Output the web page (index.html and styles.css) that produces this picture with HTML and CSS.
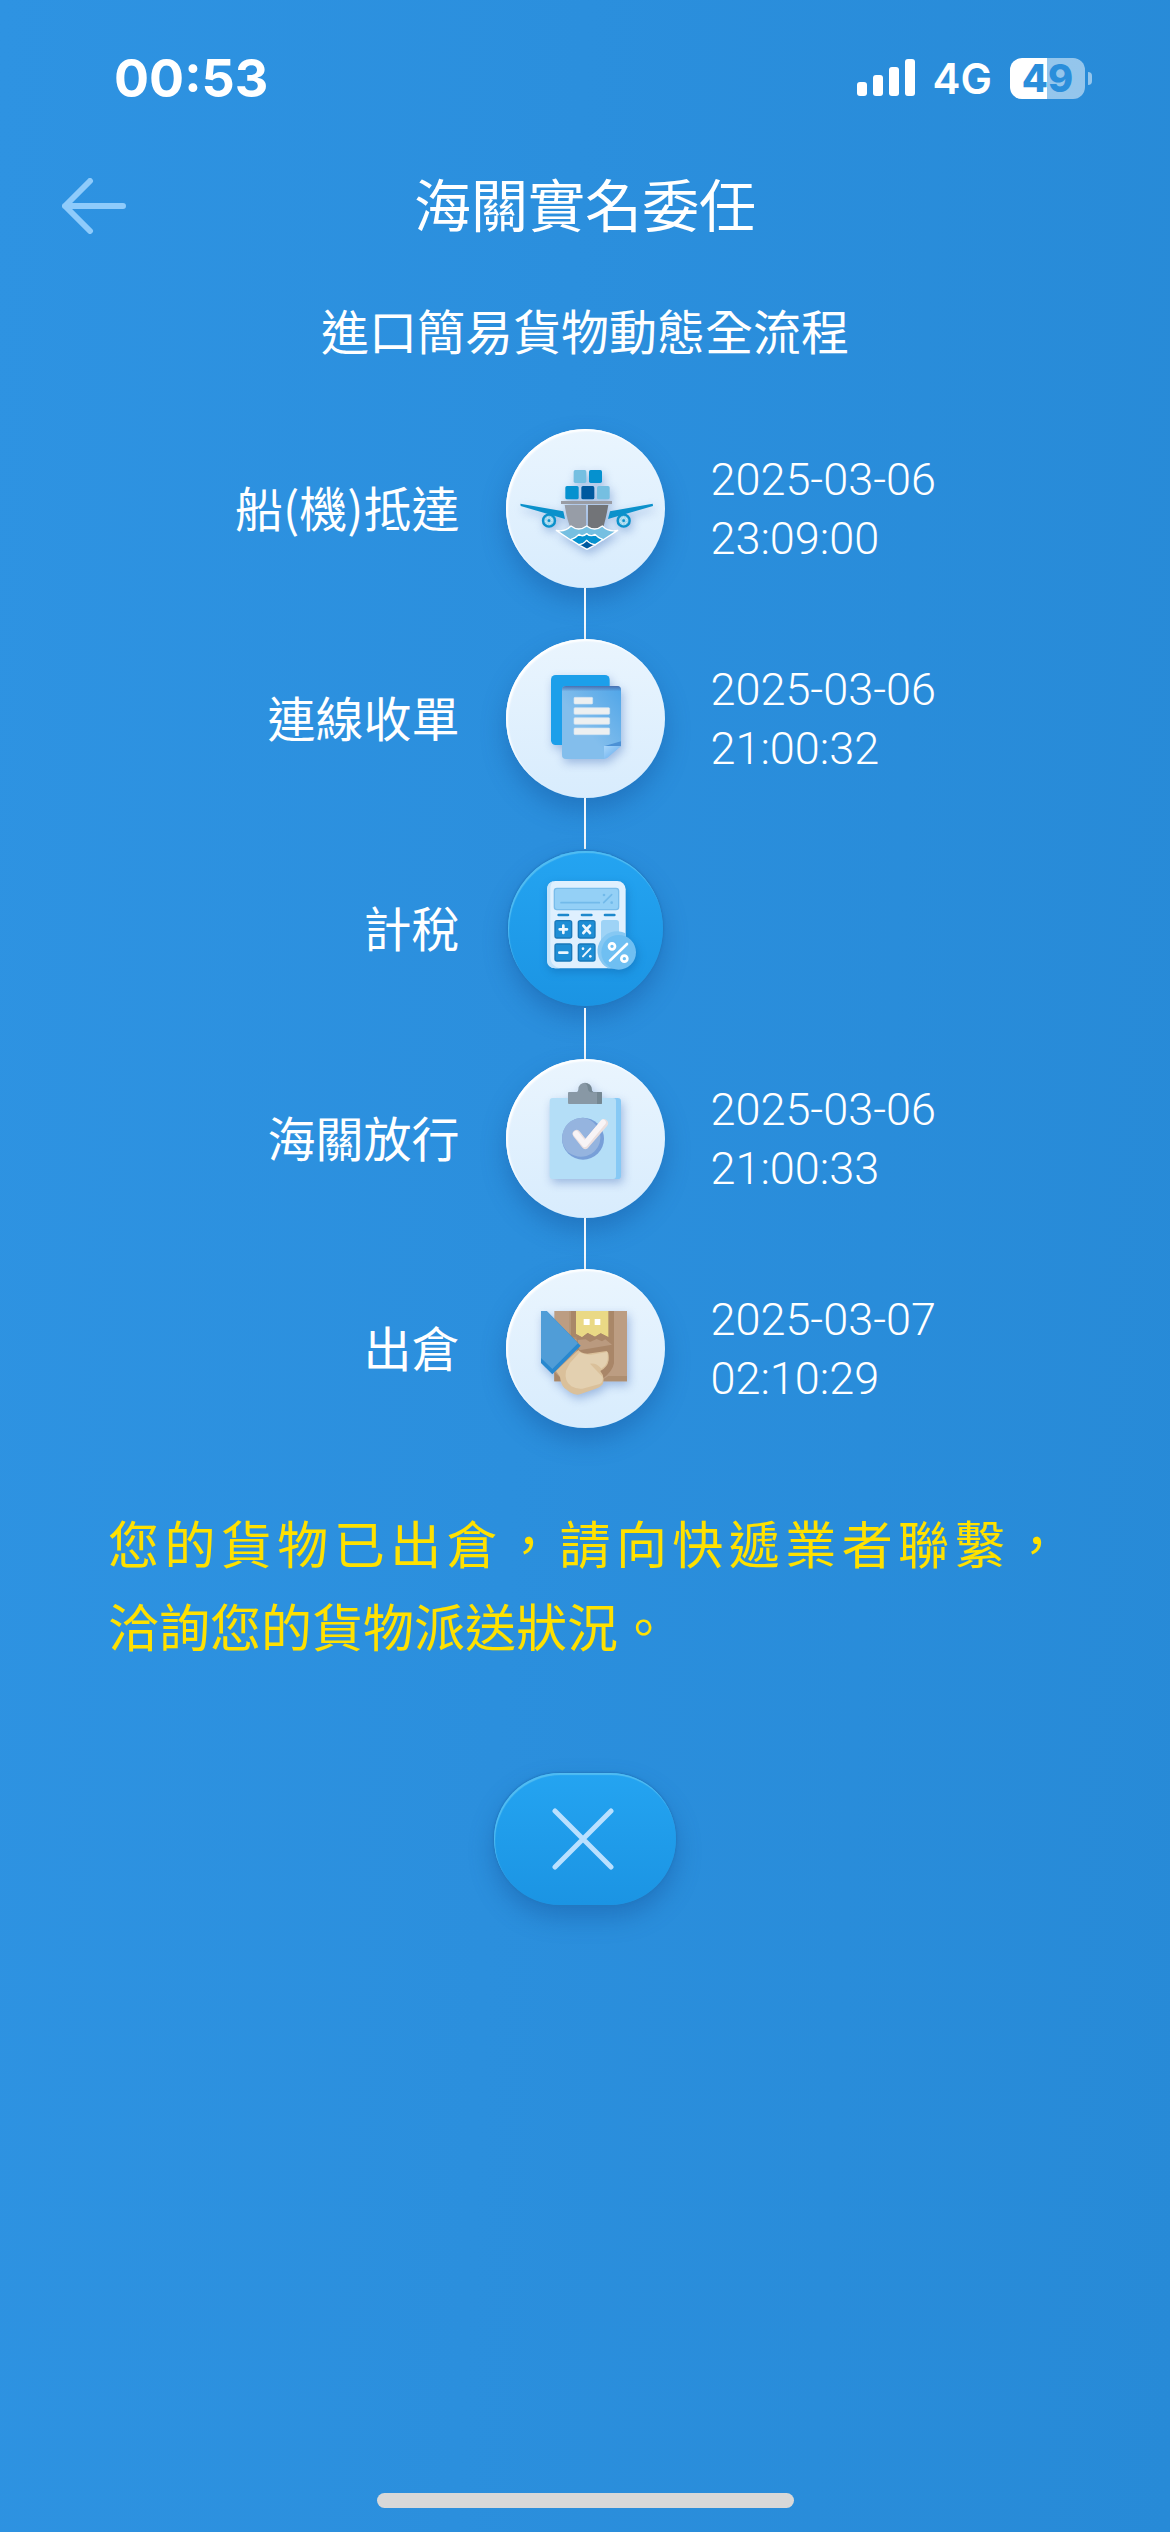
FILE: index.html
```html
<!DOCTYPE html>
<html lang="zh-Hant">
<head>
  <meta charset="utf-8" />
  <meta name="viewport" content="width=device-width, initial-scale=1" />
  <title>海關實名委任</title>
  <link rel="stylesheet" href="styles.css">
</head>
<body>
  <div class="status-bar">
    <span class="clock">00:53</span>
    <div class="status-right">
      <svg class="signal" viewBox="0 0 58 38" aria-hidden="true">
        <rect x="0" y="23" width="10" height="14" rx="3" />
        <rect x="16" y="16" width="10" height="21" rx="3" />
        <rect x="32" y="8" width="10" height="29" rx="3" />
        <rect x="48" y="0" width="10" height="37" rx="3" />
      </svg>
      <span class="network">4G</span>
      <div class="battery-wrap">
        <span class="battery">49</span>
        <span class="battery-tip"></span>
      </div>
    </div>
  </div>

  <header class="top-bar">
    <button class="back" aria-label="返回">
      <svg viewBox="0 0 64 56" aria-hidden="true">
        <path d="M28 3 L3 28 L28 53 M3 28 H61" />
      </svg>
    </button>
    <h1>海關實名委任</h1>
  </header>

  <main>
    <h2>進口簡易貨物動態全流程</h2>

    <ol class="steps">
      <li class="step">
        <span class="label">船(機)抵達</span>
        <div class="node">
          <div class="circle">
            <svg viewBox="18 27 477 477" aria-hidden="true">
              <g class="lift">
                <rect x="221" y="150" width="38" height="39" rx="5" fill="#75bfe1" />
                <rect x="267" y="150" width="39" height="39" rx="5" fill="#0591cf" />
                <rect x="196" y="198" width="40" height="40" rx="5" fill="#0591cf" />
                <rect x="244" y="198" width="39" height="40" rx="5" fill="#00599f" />
                <rect x="291" y="198" width="38" height="40" rx="5" fill="#75bfe1" />
                <rect x="183" y="243" width="153" height="9" fill="#999ca4" />
                <path d="M194 255 H258 V326 H213 Q202 305 194 255Z" fill="#979da7" />
                <path d="M264 255 H325 Q316 305 308 326 H264Z" fill="#727478" />
                <path d="M61 251 L190 274 L195 297 L62 258Z" fill="#0b91cb" />
                <path d="M458 251 L330 274 L324 297 L459 258Z" fill="#0b91cb" />
                <circle cx="147" cy="302" r="18" fill="#8ccbe6" stroke="#0b91cb" stroke-width="7" />
                <circle cx="147" cy="302" r="9" fill="none" stroke="#d8effa" stroke-width="7" stroke-dasharray="2 2" />
                <circle cx="147" cy="302" r="4" fill="#0b91cb" />
                <circle cx="371" cy="302" r="18" fill="#8ccbe6" stroke="#0b91cb" stroke-width="7" />
                <circle cx="371" cy="302" r="9" fill="none" stroke="#d8effa" stroke-width="7" stroke-dasharray="2 2" />
                <circle cx="371" cy="302" r="4" fill="#0b91cb" />
                <g stroke="#fff" stroke-width="4" stroke-linejoin="round">
                  <path d="M169 331 Q194 337 213 318 Q236 336 260 318 Q284 336 307 318 Q326 337 353 331 L309 360 Q296 354 285 344 Q273 352 260 341 Q248 352 237 344 Q225 355 212 360Z" fill="#75bfe1" />
                  <path d="M212 359 Q227 355 237 343 Q248 352 260 341 Q273 352 285 343 Q295 355 309 359 L286 374 Q271 373 260 361 Q250 373 236 374Z" fill="#0591cf" />
                  <path d="M235 374 Q250 373 260 361 Q271 373 287 374 L261 388Z" fill="#00599f" />
                </g>
              </g>
            </svg>
          </div>
          <span class="connector"></span>
        </div>
        <time class="time" datetime="2025-03-06T23:09:00"><span>2025-03-06</span><span>23:09:00</span></time>
      </li>

      <li class="step">
        <span class="label">連線收單</span>
        <div class="node">
          <div class="circle">
            <svg viewBox="18 27 477 477" aria-hidden="true">
              <defs>
                <linearGradient id="paper" x1="0" y1="1" x2="1" y2="0">
                  <stop offset="0.4" stop-color="#83beec" />
                  <stop offset="1" stop-color="#4fa5e8" />
                </linearGradient>
                <linearGradient id="fold" x1="0" y1="0" x2="1" y2="1">
                  <stop offset="0" stop-color="#a8d6fa" />
                  <stop offset="0.6" stop-color="#7dbbf2" />
                </linearGradient>
                <linearGradient id="paperTop" x1="0" y1="0" x2="0" y2="1">
                  <stop offset="0" stop-color="#4a70b0" />
                  <stop offset="1" stop-color="#4a70b0" stop-opacity="0" />
                </linearGradient>
              </defs>
              <g class="lift">
                <rect x="153" y="135" width="176" height="210" rx="14" fill="#1c9fea" />
                <path d="M198 168 H351 Q363 168 363 180 V348 L312 387 H198 Q186 387 186 375 V180 Q186 168 198 168Z" fill="url(#paper)" />
                <path d="M198 168 H351 Q363 168 363 180 V184 H186 V180 Q186 168 198 168Z" fill="url(#paperTop)" />
                <path d="M363 334 V348 H314Z" fill="#4c91d5" />
                <path d="M312 348 H363 L324 382 Q318 387 312 387Z" fill="url(#fold)" />
                <g fill="#edf0f1" stroke="#cfe3f3" stroke-width="2">
                  <rect x="222" y="202" width="56" height="20" rx="3" />
                  <rect x="222" y="233" width="107" height="20" rx="3" />
                  <rect x="222" y="263" width="107" height="20" rx="3" />
                  <rect x="222" y="294" width="107" height="20" rx="3" />
                </g>
              </g>
            </svg>
          </div>
          <span class="connector"></span>
        </div>
        <time class="time" datetime="2025-03-06T21:00:32"><span>2025-03-06</span><span>21:00:32</span></time>
      </li>

      <li class="step">
        <span class="label">計稅</span>
        <div class="node">
          <div class="circle circle-active">
            <svg viewBox="24 33 465 465" aria-hidden="true">
              <g class="lift-dark">
                <rect x="141" y="123" width="236" height="262" rx="25" fill="#dff0fe" />
                <path d="M160 124 Q141 128 141 148 V360 Q141 384 166 385 H180 Q151 378 151 352 V148 Q151 130 160 124Z" fill="#c3e3fa" />
                <rect x="163" y="145" width="193" height="64" rx="8" fill="#94d0f6" stroke="#79bdeb" stroke-width="4" />
                <path d="M183 188 H298 M311 188 L335 164" stroke="#72baea" stroke-width="5" stroke-linecap="round" />
                <circle cx="312" cy="165" r="4" fill="#72baea" />
                <circle cx="335" cy="188" r="4" fill="#72baea" />
                <path d="M176 225 H204 M246 225 H274 M315 225 H343" stroke="#1d88cc" stroke-width="8" stroke-linecap="round" />
                <g fill="#1e8ed5" stroke="#1978b9" stroke-width="4">
                  <rect x="165" y="242" width="50" height="52" rx="6" />
                  <rect x="235" y="242" width="50" height="52" rx="6" />
                  <rect x="165" y="312" width="50" height="51" rx="6" />
                  <rect x="235" y="312" width="50" height="51" rx="6" />
                </g>
                <rect x="303" y="240" width="54" height="123" rx="8" fill="#9ed3f6" />
                <path d="M179 268 H201 M190 257 V279 M250 257 L270 279 M270 257 L250 279 M178 338 H202" stroke="#edf7fe" stroke-width="8" stroke-linecap="round" />
                <path d="M249 349 L271 326" stroke="#edf7fe" stroke-width="6" stroke-linecap="round" />
                <circle cx="249" cy="326" r="4" fill="#edf7fe" />
                <circle cx="271" cy="349" r="4" fill="#edf7fe" />
                <path d="M377 280 A58 58 0 0 0 325 385 H352 Q377 385 377 360Z" fill="#86c8f3" />
                <circle cx="356" cy="337" r="52" fill="#6fbff2" />
                <path d="M330 362 L381 312" stroke="#fff" stroke-width="8" stroke-linecap="round" />
                <circle cx="336" cy="319" r="9" fill="none" stroke="#fff" stroke-width="8" />
                <circle cx="373" cy="356" r="9" fill="none" stroke="#fff" stroke-width="8" />
              </g>
            </svg>
          </div>
          <span class="connector"></span>
        </div>
        <span class="time"></span>
      </li>

      <li class="step">
        <span class="label">海關放行</span>
        <div class="node">
          <div class="circle">
            <svg viewBox="21 27 477 477" aria-hidden="true">
              <g class="lift">
                <rect x="300" y="144" width="66" height="243" rx="10" fill="#87c9f5" />
                <rect x="152" y="144" width="199" height="243" rx="9" fill="#b4def7" />
                <path d="M207 129 Q207 126 210 126 H234 Q238 124 238 118 A20 20 0 0 1 278 118 Q278 124 283 126 H306 Q309 126 309 129 V159 Q309 162 306 162 H210 Q207 162 207 159Z" fill="#8898a5" />
                <path d="M258 99 Q278 101 278 118 Q278 124 283 126 H306 Q309 126 309 129 V159 Q309 162 306 162 H294 V127 H276 Q266 126 266 112 Q266 104 258 99Z" fill="#758792" />
                <circle cx="252" cy="266" r="63" fill="#789fd8" />
                <path d="M252 203 A58 58 0 0 1 290 224 A58 58 0 0 1 262 318 Q235 326 207 307 A61 61 0 0 1 252 203Z" fill="#95b4df" />
                <path d="M233 252 L259 285 L315 220" fill="none" stroke="#eadfdf" stroke-width="24" stroke-linecap="round" stroke-linejoin="round" />
                <path d="M231 251 L257 283 L312 217" fill="none" stroke="#f8f4f6" stroke-width="17" stroke-linecap="round" stroke-linejoin="round" />
              </g>
            </svg>
          </div>
          <span class="connector"></span>
        </div>
        <time class="time" datetime="2025-03-06T21:00:33"><span>2025-03-06</span><span>21:00:33</span></time>
      </li>

      <li class="step">
        <span class="label">出倉</span>
        <div class="node">
          <div class="circle">
            <svg viewBox="18 27 477 477" aria-hidden="true">
              <g class="lift">
                <rect x="163" y="153" width="218" height="211" fill="#bc9d82" />
                <path d="M163 335 L192 364 H163Z" fill="#a98768" />
                <path d="M207 153 H342 V252 L207 235Z" fill="#b0906f" />
                <path d="M207 153 H213 V240 H207Z" fill="#b59678" />
                <path d="M300 364 H381 V348 H325Z" fill="#ae8e70" />
                <path d="M213 153 H228 V232 H213Z M325 153 H342 V252 L325 243Z" fill="#a98768" />
                <path d="M228 153 H325 V232 L302 220 L285 230 L263 219 L246 232 L228 222Z" fill="#ead985" />
                <path d="M228 222 L246 232 L263 219 L285 230 L302 220 L326 232 L342 251 L342 310 Q338 333 310 355 L230 290 V240Z" fill="#a98668" />
                <path d="M233 240 L257 238 L270 246 L290 237 L306 244 L316 238 L336 254 L238 271Z" fill="#ba9a7f" />
                <rect x="251" y="177" width="18" height="18" fill="#fff" />
                <rect x="284" y="177" width="17" height="18" fill="#fff" />
                <path d="M235 270 Q242 279 262 281 L320 273 Q328 278 326 301 Q323 322 301 333 Q316 350 308 373 Q300 383 283 388 L242 402 Q228 408 210 397 L193 384 Q182 372 180 350 L168 333Z" fill="#dac09a" />
                <path d="M239 277 Q254 286 274 284 L322 276 Q327 302 315 317 L304 326 Q290 308 270 311 L308 351 Q310 367 299 372 L247 386 Q230 388 214 379 Q192 363 198 332 L210 309Z" fill="#e3d0b0" />
                <path d="M123 153 H140 L242 257 L157 343 L123 309Z" fill="#2888cf" />
                <path d="M123 153 H140 L234 250 L157 327 L123 294Z" fill="#509dd7" />
              </g>
            </svg>
          </div>
        </div>
        <time class="time" datetime="2025-03-07T02:10:29"><span>2025-03-07</span><span>02:10:29</span></time>
      </li>
    </ol>

    <p class="message">
      <span class="fill-line">您的貨物已出倉，請向快遞業者聯繫，</span>
      <span>洽詢您的貨物派送狀況。</span>
    </p>

    <button class="close" aria-label="關閉">
      <svg viewBox="0 0 62 62" aria-hidden="true">
        <path d="M3 3 L59 59 M59 3 L3 59" />
      </svg>
    </button>
  </main>

  <div class="home-indicator"></div>
</body>
</html>
```

FILE: styles.css
```css
* {
  box-sizing: border-box;
}
body {
  margin: 0;
  min-height: 100vh;
  display: flex;
  flex-direction: column;
  font-family: "Noto Sans CJK TC", sans-serif;
  color: #fff;
  background: linear-gradient(93deg, #2e93e2 0%, #2b8fdd 45%, #278ad7 100%);
}
h1,
h2,
p,
ol {
  margin: 0;
  padding: 0;
  font-weight: 400;
}
button {
  padding: 0;
  border: none;
  background: none;
  cursor: pointer;
}
svg {
  display: block;
}

/* status bar */
.status-bar {
  display: flex;
  justify-content: space-between;
  align-items: center;
  height: 156px;
  padding: 0 78px 0 114px;
  font-family: Inter, sans-serif;
}
.clock {
  font-size: 52px;
  font-weight: 700;
}
.status-right {
  display: flex;
  align-items: center;
  gap: 18px;
}
.signal {
  width: 58px;
  height: 38px;
  fill: #fff;
}
.network {
  font-size: 42px;
  font-weight: 600;
}
.battery-wrap {
  display: flex;
  align-items: center;
  gap: 3px;
}
.battery {
  width: 75px;
  border-radius: 12px;
  font-size: 38px;
  font-weight: 800;
  line-height: 41px;
  text-align: center;
  color: #2a8edb;
  background: linear-gradient(to right, #fff 49%, rgba(255, 255, 255, 0.5) 49%);
}
.battery-tip {
  width: 4px;
  height: 13px;
  border-radius: 0 6px 6px 0;
  background: rgba(255, 255, 255, 0.5);
}

/* title */
.top-bar {
  display: grid;
  grid-template-columns: 64px 1fr 64px;
  align-items: center;
  height: 100px;
  padding: 0 62px;
}
.back svg {
  width: 64px;
  height: 56px;
  fill: none;
  stroke: #8ecbfb;
  stroke-width: 6;
  stroke-linecap: round;
  stroke-linejoin: round;
}
h1 {
  padding-bottom: 8px;
  font-size: 57px;
  line-height: 80px;
  text-align: center;
}
main {
  display: flex;
  flex-direction: column;
  align-items: center;
}
h2 {
  margin: 37px 0 64px;
  font-size: 48px;
  line-height: 72px;
}

/* timeline */
.steps {
  width: 100%;
  list-style: none;
}
.step {
  display: grid;
  grid-template-columns: 1fr 159px 1fr;
  gap: 46px;
}
.label,
.time {
  display: flex;
  height: 160px;
}
.label {
  align-items: center;
  justify-content: flex-end;
  padding-bottom: 6px;
  font-size: 48px;
}
.time {
  flex-direction: column;
  justify-content: center;
  font-family: Roboto, sans-serif;
  font-size: 45px;
  font-weight: 300;
  line-height: 59px;
}
.node {
  display: flex;
  flex-direction: column;
  align-items: center;
}
.circle {
  width: 159px;
  height: 159px;
  border-radius: 50%;
  background: linear-gradient(#eaf5fe, #d8ecfd);
  box-shadow: inset 2px 2px 2px #fff, 0 12px 24px rgba(20, 80, 150, 0.4);
}
.circle-active {
  width: 155px;
  height: 155px;
  margin: 2px 0;
  background: linear-gradient(#24a4f1, #1b94e3);
  box-shadow: inset 1px 2px 1px #52bdf2, 0 0 2px 1px #2279c0, 0 12px 24px rgba(20, 80, 150, 0.4);
}
.lift {
  filter: drop-shadow(6px 12px 14px rgba(80, 120, 190, 0.45));
}
.lift-dark {
  filter: drop-shadow(4px 10px 12px rgba(10, 90, 160, 0.4));
}
.connector {
  width: 2px;
  height: 51px;
  background: #f0f6fc;
}

/* message */
.message {
  width: 100%;
  margin: 72px 0 106px;
  padding: 0 108px;
  font-size: 51px;
  line-height: 83px;
  color: #ffe100;
}
.message span {
  display: block;
}
.fill-line {
  text-align-last: justify;
}

.close {
  display: flex;
  align-items: center;
  justify-content: center;
  width: 182px;
  height: 132px;
  padding-right: 4px;
  border-radius: 66px;
  background: linear-gradient(#24a4f1, #1b94e3);
  box-shadow: inset 1px 2px 1px #52bdf2, 0 0 2px 1px #2279c0, 0 12px 24px rgba(20, 80, 150, 0.4);
}
.close svg {
  width: 62px;
  height: 62px;
  stroke: #b9e0ff;
  stroke-width: 5;
  stroke-linecap: round;
}

.home-indicator {
  width: 417px;
  max-width: 60%;
  height: 15px;
  margin: auto auto 24px;
  border-radius: 8px;
  background: #d8d8d8;
}
```
